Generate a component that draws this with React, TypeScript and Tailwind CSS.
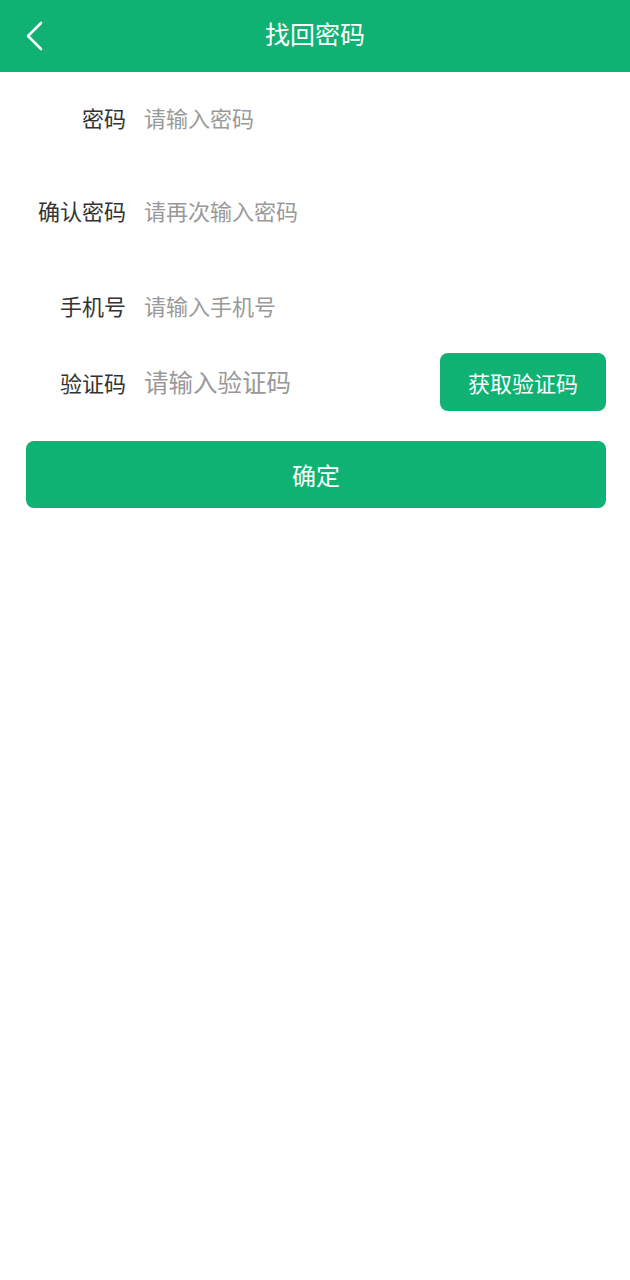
import { useState } from "react";

export default function App() {
  const [form, setForm] = useState({
    password: "",
    confirm: "",
    phone: "",
    code: "",
  });

  const handleChange = (e: any) => {
    setForm({ ...form, [e.target.name]: e.target.value });
  };

  return (
    <main
      className="min-h-screen bg-white"
      style={{ fontFamily: '"Noto Sans CJK SC", "Noto Sans", sans-serif' }}
    >
      <header className="relative h-[72px] pb-[6px] bg-[#10b273] flex items-center justify-center">
        <button className="absolute left-[22px] top-[20px] w-[24px] h-[32px] flex items-center justify-center">
          <svg width="20" height="30" viewBox="0 0 20 30" fill="none">
            <path
              d="M17 2 L4 15 L17 28"
              stroke="white"
              strokeWidth="2.6"
              strokeLinecap="round"
              strokeLinejoin="round"
            />
          </svg>
        </button>
        <h1 className="text-white text-[25px] leading-none">找回密码</h1>
      </header>

      <div className="flex flex-col">
        <div className="h-[91px] flex items-center">
          <label className="w-[126px] text-right text-[22px] text-[#333]">密码</label>
          <input
            name="password"
            type="password"
            placeholder="请输入密码"
            value={form.password}
            onChange={handleChange}
            className="ml-[18px] flex-1 mr-[24px] text-[22px] text-[#333] placeholder:text-[#999] outline-none"
          />
        </div>

        <div className="h-[95px] flex items-center">
          <label className="w-[126px] text-right text-[22px] text-[#333]">确认密码</label>
          <input
            name="confirm"
            type="password"
            placeholder="请再次输入密码"
            value={form.confirm}
            onChange={handleChange}
            className="ml-[18px] flex-1 mr-[24px] text-[22px] text-[#333] placeholder:text-[#999] outline-none"
          />
        </div>

        <div className="h-[94px] flex items-center">
          <label className="w-[126px] text-right text-[22px] text-[#333]">手机号</label>
          <input
            name="phone"
            placeholder="请输入手机号"
            value={form.phone}
            onChange={handleChange}
            className="ml-[18px] flex-1 mr-[24px] text-[22px] text-[#333] placeholder:text-[#999] outline-none"
          />
        </div>

        <div className="mt-[1px] h-[58px] flex items-center">
          <label className="w-[126px] text-right text-[22px] text-[#333]">验证码</label>
          <input
            name="code"
            placeholder="请输入验证码"
            value={form.code}
            onChange={handleChange}
            className="ml-[18px] flex-1 min-w-0 text-[24.5px] text-[#333] placeholder:text-[#999] outline-none"
          />
          <button className="ml-2 mr-[24px] w-[166px] h-[58px] rounded-[8px] bg-[#10b273] text-white text-[22px]">
            获取验证码
          </button>
        </div>

        <button className="mt-[30px] mx-[24px] ml-[26px] h-[67px] rounded-[8px] bg-[#10b273] text-white text-[24px]">
          确定
        </button>
      </div>
    </main>
  );
}
